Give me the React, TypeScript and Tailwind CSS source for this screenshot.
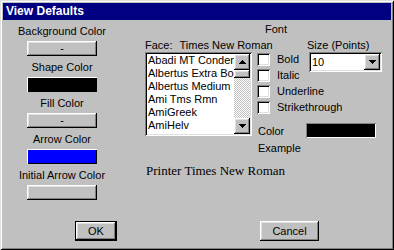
import React from "react";

const raised =
  "shadow-[inset_-1px_-1px_#000,inset_1px_1px_#fff,inset_-2px_-2px_#808080,inset_2px_2px_#dfdfdf]";
const sunken =
  "shadow-[inset_1px_1px_#808080,inset_-1px_-1px_#fff,inset_2px_2px_#000,inset_-2px_-2px_#dfdfdf]";

const Arrow = ({ up }: { up?: boolean }) => (
  <svg width="7" height="4" viewBox="0 0 7 4" shapeRendering="crispEdges">
    {[0, 1, 2, 3].map((i) => {
      const row = up ? i : 3 - i;
      return <rect key={i} x={3 - row} y={i} width={row * 2 + 1} height={1} fill="#000" />;
    })}
  </svg>
);

const colorButtons = [
  { label: "Background Color", fill: "" },
  { label: "Shape Color", fill: "black" },
  { label: "Fill Color", fill: "" },
  { label: "Arrow Color", fill: "blue" },
  { label: "Initial Arrow Color", fill: "empty" },
];

const fonts = [
  "Abadi MT Condensed Light",
  "Albertus Extra Bold",
  "Albertus Medium",
  "Ami Tms Rmn",
  "AmiGreek",
  "AmiHelv",
];

const styles = ["Bold", "Italic", "Underline", "Strikethrough"];

export default function App() {
  return (
    <div className="w-[394px] h-[250px] bg-[#c0c0c0] p-[3px] shadow-[inset_1px_1px_#dfdfdf,inset_-1px_-1px_#000,inset_2px_2px_#fff,inset_-2px_-2px_#808080] font-['Liberation_Sans',Arial,sans-serif] text-[11px] leading-[13px] text-black overflow-hidden">
      {/* Title bar */}
      <div className="h-[17px] bg-[#000080] text-white font-bold text-[12px] leading-[17px] pl-[3px]">
        View Defaults
      </div>

      {/* Body */}
      <div className="flex h-[181px]">
        {/* Left column: colour buttons */}
        <div className="w-[118px] flex flex-col items-center pt-[5px] gap-[5px]">
          {colorButtons.map((b) => (
            <div key={b.label} className="flex flex-col items-center">
              <div className="h-[13px] whitespace-nowrap">{b.label}</div>
              {b.fill === "black" ? (
                <div className="mt-[3px] w-[70px] h-[15px] bg-black shadow-[inset_1px_1px_#fff]" />
              ) : b.fill === "blue" ? (
                <div className="mt-[3px] w-[70px] h-[15px] bg-[#0000ff] shadow-[inset_1px_1px_#fff,inset_-1px_-1px_#000]" />
              ) : (
                <div
                  className={`mt-[3px] w-[70px] h-[15px] flex items-center justify-center leading-[11px] ${raised}`}
                >
                  {b.fill === "" ? "-" : ""}
                </div>
              )}
            </div>
          ))}
        </div>

        {/* Right section: font */}
        <div className="flex-1 pl-[24px]">
          <div className="pl-[120px] mt-[3px] h-[13px]">Font</div>
          <div className="flex mt-[3px] h-[13px]">
            <div className="w-[162px] whitespace-nowrap">
              <span>Face:</span>
              <span className="ml-[7px]">Times New Roman</span>
            </div>
            <div className="whitespace-nowrap">Size (Points)</div>
          </div>

          <div className="flex items-start">
            {/* Face list */}
            <div className={`w-[107px] h-[84px] bg-white p-[2px] flex ${sunken}`}>
              <div className="flex-1 overflow-hidden pl-[1px]">
                {fonts.map((f) => (
                  <div key={f} className="whitespace-nowrap h-[13px]">
                    {f}
                  </div>
                ))}
              </div>
              <div className="w-[16px] flex flex-col">
                <div className={`h-[16px] flex items-center justify-center bg-[#c0c0c0] ${raised}`}>
                  <Arrow up />
                </div>
                <div className={`h-[8px] bg-[#c0c0c0] ${raised}`} />
                <div className="flex-1 bg-[repeating-conic-gradient(#fff_0_25%,#c0c0c0_0_50%)] bg-[length:2px_2px]" />
                <div className={`h-[16px] flex items-center justify-center bg-[#c0c0c0] ${raised}`}>
                  <Arrow />
                </div>
              </div>
            </div>

            <div className="ml-[5px] flex flex-col">
              <div className="flex">
                {/* Style checkboxes */}
                <div className="w-[52px] pt-[1px] flex flex-col gap-[3px]">
                  {styles.map((s) => (
                    <div key={s} className="flex items-center h-[13px] whitespace-nowrap">
                      <div className={`w-[13px] h-[13px] bg-white shrink-0 ${sunken}`} />
                      <span className="ml-[7px]">{s}</span>
                    </div>
                  ))}
                </div>

                {/* Size combo */}
                <div className={`w-[73px] h-[20px] bg-white p-[2px] flex ${sunken}`}>
                  <div className="flex-1 pl-[1px] leading-[16px]">10</div>
                  <div className={`w-[16px] h-[16px] bg-[#c0c0c0] flex items-center justify-center ${raised}`}>
                    <Arrow />
                  </div>
                </div>
              </div>

              <div className="flex mt-[9px] h-[15px]">
                <div className="w-[49px] pl-[1px] mt-[2px]">Color</div>
                <div className="w-[70px] h-[15px] bg-black shadow-[inset_1px_1px_#808080,inset_-1px_-1px_#fff]" />
              </div>
              <div className="pl-[1px] mt-[4px] h-[13px]">Example</div>
            </div>
          </div>

          <div className="mt-[8px] pl-[1px] font-['Liberation_Serif','Times_New_Roman',serif] text-[13px] leading-[15px]">
            Printer Times New Roman
          </div>
        </div>
      </div>

      {/* Buttons */}
      <div className="flex mt-[20px]">
        <div className="ml-[72px] w-[42px] h-[20px] border border-black">
          <div className={`w-full h-full flex items-center justify-center ${raised}`}>OK</div>
        </div>
        <div className={`ml-[143px] w-[59px] h-[20px] flex items-center justify-center ${raised}`}>
          Cancel
        </div>
      </div>
    </div>
  );
}
